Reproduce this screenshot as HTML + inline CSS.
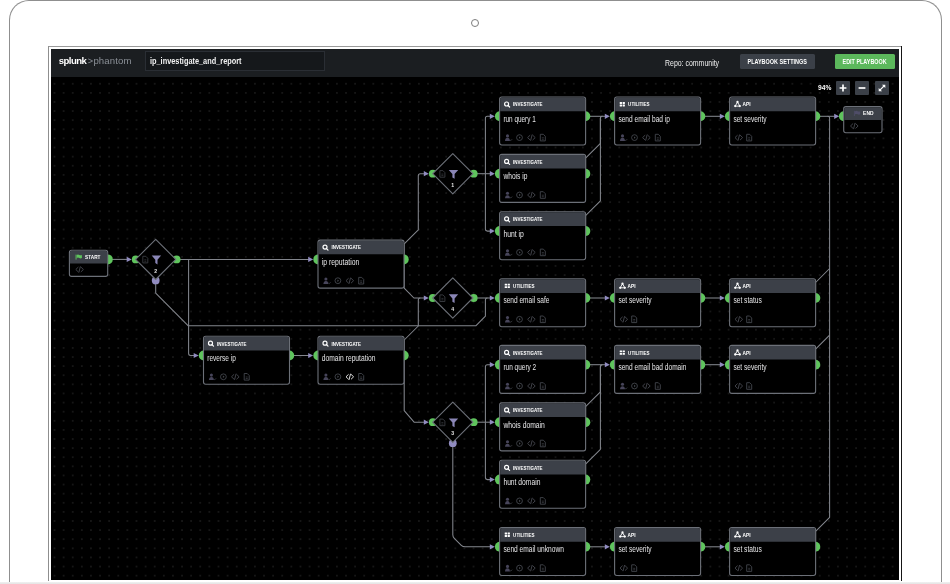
<!DOCTYPE html>
<html lang="en">
<head>
<meta charset="utf-8">
<title>ip_investigate_and_report - Splunk Phantom</title>
<style>
html,body{margin:0;padding:0;background:#fff;}
body{width:950px;height:584px;position:relative;overflow:hidden;font-family:"Liberation Sans",Arial,sans-serif;}
.device{position:absolute;left:9px;top:0;width:931px;height:581px;border:1px solid #8f8f8f;border-bottom:none;border-radius:20px 20px 0 0;box-sizing:content-box;}
.cam{position:absolute;left:471px;top:19px;width:6px;height:6px;border:1px solid #7d7d7d;border-radius:50%;}
.foot{position:absolute;left:0;top:582px;width:950px;height:2px;background:linear-gradient(#f1f1f1,#e3e3e3);}
.bezel-l{position:absolute;left:48px;top:46px;width:1px;height:535px;background:#8f8f8f;}
.bezel-t{position:absolute;left:48px;top:46px;width:854px;height:1px;background:#9a9a9a;}
.bezel-r{position:absolute;left:901px;top:46px;width:1px;height:535px;background:#151515;}
.screen{will-change:transform;position:absolute;left:51px;top:49px;width:848px;height:531px;background:#000;overflow:hidden;}
.dots{position:absolute;left:0;top:28px;right:0;bottom:0;background-image:radial-gradient(circle,#242424 0.45px,rgba(0,0,0,0) 0.95px);background-size:9.12px 9.12px;background-position:-1.06px 2.2px;}
.topbar{position:absolute;left:0;top:0;width:848px;height:28px;background:#1b1e21;}
.logo{position:absolute;left:7.8px;top:5.4px;font-size:9.6px;line-height:14px;color:#fff;font-weight:700;letter-spacing:-0.58px;white-space:nowrap;}
.logo span{font-weight:400;color:#8b9097;letter-spacing:0.12px;margin-left:0.2px;}
.logo i{font-style:normal;font-weight:400;color:#8b9097;margin-left:1.6px;letter-spacing:0;font-size:9.2px;}
.name{position:absolute;left:94px;top:2px;width:180px;height:20px;box-sizing:border-box;border:1px solid #2a2e34;background:#15181b;color:#f2f2f2;font-size:8.3px;font-weight:700;line-height:18.6px;padding-left:4px;white-space:nowrap;}
.name span,.repo span,.btn span,.zoom span{display:inline-block;transform-origin:0 50%;}
.btn span{transform-origin:50% 50%;}
.repo{position:absolute;left:613.8px;top:7.6px;font-size:8.5px;line-height:12px;color:#f0f0f0;white-space:nowrap;}
.btn{position:absolute;top:5px;height:15px;line-height:16.2px;font-size:6.3px;font-weight:700;color:#fff;text-align:center;border-radius:1.5px;white-space:nowrap;}
.b1{left:688.6px;width:75.4px;background:#3b4048;}
.b2{left:784px;width:60px;background:#5cb85c;}
.zoom{position:absolute;left:766.5px;top:34.3px;font-size:7.6px;line-height:10px;font-weight:700;color:#fff;white-space:nowrap;}
.zb{position:absolute;top:32.2px;width:13.9px;height:13.9px;background:#3b4048;border-radius:1px;}
.zb svg{position:absolute;left:0;top:0;}
.graph{position:absolute;left:0;top:0;}
</style>
</head>
<body>
<div class="device"></div>
<div class="cam"></div>
<div class="bezel-t"></div><div class="bezel-l"></div><div class="bezel-r"></div>
<div class="screen">
  <div class="dots"></div>
  <div class="topbar">
    <div class="logo">splunk<i>&gt;</i><span>phantom</span></div>
    <div class="name"><span style="transform:scaleX(0.886)">ip_investigate_and_report</span></div>
    <div class="repo"><span style="transform:scaleX(0.818)">Repo: community</span></div>
    <div class="btn b1"><span style="transform:scaleX(0.869)">PLAYBOOK SETTINGS</span></div>
    <div class="btn b2"><span style="transform:scaleX(0.863)">EDIT PLAYBOOK</span></div>
  </div>
  <div class="zoom"><span style="transform:scaleX(0.875)">94%</span></div>
  <div class="zb" style="left:785.2px"><svg width="14" height="14" viewBox="0 0 14 14"><path d="M7 3.6v6.8M3.6 7h6.8" stroke="#fff" stroke-width="1.7" fill="none"/></svg></div>
  <div class="zb" style="left:804.4px"><svg width="14" height="14" viewBox="0 0 14 14"><path d="M3.6 7h6.8" stroke="#fff" stroke-width="1.7" fill="none"/></svg></div>
  <div class="zb" style="left:824px"><svg width="14" height="14" viewBox="0 0 14 14"><path d="M4.4 9.6L9.6 4.4" stroke="#fff" stroke-width="1.3" fill="none"/><path d="M6.9 3.7h3.4v3.4zM3.7 6.9v3.4h3.4z" fill="#fff"/></svg></div>
</div>
<svg class="graph" width="950" height="584" viewBox="0 0 950 584">
<g fill="none" stroke="#83868d" stroke-width="1.05" stroke-linejoin="round">
<path d="M112 259.4H128.7"/>
<path d="M178.7 259.4H310.2"/>
<path d="M188.6 259.4V353.5Q188.6 355.5 190.6 355.5H195.7"/>
<path d="M155.7 282.4V293.1L188.3 325.8H475.8L485.4 316.2V300Q485.4 298 487.4 298"/>
<path d="M293 355.5H310.2"/>
<path d="M404.2 259.4V243.9L418.3 229.9V175.7Q418.3 173.7 420.3 173.7H425.8"/>
<path d="M404.2 259.4V288.1L413.9 298H425.8"/>
<path d="M404.2 355.5V340L418.3 326V300Q418.3 298 420.3 298"/>
<path d="M404.2 355.5V410.6L414.1 422.2H425.8"/>
<path d="M475.8 173.7H491.8"/>
<path d="M485.4 173.7V118.3Q485.4 116.3 487.4 116.3H491.8"/>
<path d="M485.4 173.7V229.1Q485.4 231.1 487.4 231.1H491.8"/>
<path d="M475.8 422.2H491.8"/>
<path d="M485.4 422.2V366.7Q485.4 364.7 487.4 364.7H491.8"/>
<path d="M485.4 422.2V477.6Q485.4 479.6 487.4 479.6H491.8"/>
<path d="M475.8 298H491.8"/>
<path d="M452.8 445.2V534.8Q452.8 536.8 454.3 538.3L461.3 545.3Q462.8 546.8 465.3 546.8H491.8"/>
<path d="M589.1 116.3H606.8"/>
<path d="M704.1 116.3H721.8"/>
<path d="M589.1 298H606.8"/>
<path d="M704.1 298H721.8"/>
<path d="M589.1 364.7H606.8"/>
<path d="M704.1 364.7H721.8"/>
<path d="M589.1 546.8H606.8"/>
<path d="M704.1 546.8H721.8"/>
<path d="M585.6 173.7V158.2L600.4 143.4V118.3Q600.4 116.3 602.4 116.3"/>
<path d="M585.6 231.1V215.6L600.4 200.8V118.3Q600.4 116.3 602.4 116.3"/>
<path d="M585.6 422.2V406.7L600.4 391.9V366.7Q600.4 364.7 602.4 364.7"/>
<path d="M585.6 479.6V464.1L600.4 449.3V366.7Q600.4 364.7 602.4 364.7"/>
<path d="M819.1 116.3H836.2"/>
<path d="M827.6 116.3Q829.6 116.3 829.6 118.3V517.3L815.6 531.3V546.8"/>
<path d="M815.6 298V282.5L829.6 268.5"/>
<path d="M815.6 364.7V349.2L829.6 335.2"/>
</g>
<g fill="#918cc0">
<path d="M131.7 259.4l-5 -2.6v5.2z"/>
<path d="M313.2 259.4l-5 -2.6v5.2z"/>
<path d="M198.7 355.5l-5 -2.6v5.2z"/>
<path d="M313.2 355.5l-5 -2.6v5.2z"/>
<path d="M428.8 173.7l-5 -2.6v5.2z"/>
<path d="M428.8 298l-5 -2.6v5.2z"/>
<path d="M428.8 422.2l-5 -2.6v5.2z"/>
<path d="M494.8 173.7l-5 -2.6v5.2z"/>
<path d="M494.8 116.3l-5 -2.6v5.2z"/>
<path d="M494.8 231.1l-5 -2.6v5.2z"/>
<path d="M494.8 422.2l-5 -2.6v5.2z"/>
<path d="M494.8 364.7l-5 -2.6v5.2z"/>
<path d="M494.8 479.6l-5 -2.6v5.2z"/>
<path d="M494.8 298l-5 -2.6v5.2z"/>
<path d="M494.8 546.8l-5 -2.6v5.2z"/>
<path d="M609.8 116.3l-5 -2.6v5.2z"/>
<path d="M724.8 116.3l-5 -2.6v5.2z"/>
<path d="M609.8 298l-5 -2.6v5.2z"/>
<path d="M724.8 298l-5 -2.6v5.2z"/>
<path d="M609.8 364.7l-5 -2.6v5.2z"/>
<path d="M724.8 364.7l-5 -2.6v5.2z"/>
<path d="M609.8 546.8l-5 -2.6v5.2z"/>
<path d="M724.8 546.8l-5 -2.6v5.2z"/>
<path d="M839.2 116.3l-5 -2.6v5.2z"/>
</g>
<g fill="#5fc45d">
<circle cx="499.9" cy="116.3" r="5"/>
<circle cx="585.3" cy="116.3" r="5"/>
<circle cx="499.9" cy="173.7" r="5"/>
<circle cx="585.3" cy="173.7" r="5"/>
<circle cx="499.9" cy="231.1" r="5"/>
<circle cx="585.3" cy="231.1" r="5"/>
<circle cx="499.9" cy="298" r="5"/>
<circle cx="585.3" cy="298" r="5"/>
<circle cx="499.9" cy="364.7" r="5"/>
<circle cx="585.3" cy="364.7" r="5"/>
<circle cx="499.9" cy="422.2" r="5"/>
<circle cx="585.3" cy="422.2" r="5"/>
<circle cx="499.9" cy="479.6" r="5"/>
<circle cx="585.3" cy="479.6" r="5"/>
<circle cx="499.9" cy="546.8" r="5"/>
<circle cx="585.3" cy="546.8" r="5"/>
<circle cx="614.9" cy="116.3" r="5"/>
<circle cx="700.3" cy="116.3" r="5"/>
<circle cx="614.9" cy="298" r="5"/>
<circle cx="700.3" cy="298" r="5"/>
<circle cx="614.9" cy="364.7" r="5"/>
<circle cx="700.3" cy="364.7" r="5"/>
<circle cx="614.9" cy="546.8" r="5"/>
<circle cx="700.3" cy="546.8" r="5"/>
<circle cx="729.9" cy="116.3" r="5"/>
<circle cx="815.3" cy="116.3" r="5"/>
<circle cx="729.9" cy="298" r="5"/>
<circle cx="815.3" cy="298" r="5"/>
<circle cx="729.9" cy="364.7" r="5"/>
<circle cx="815.3" cy="364.7" r="5"/>
<circle cx="729.9" cy="546.8" r="5"/>
<circle cx="815.3" cy="546.8" r="5"/>
<circle cx="318.3" cy="259.4" r="5"/>
<circle cx="403.7" cy="259.4" r="5"/>
<circle cx="318.3" cy="355.5" r="5"/>
<circle cx="403.7" cy="355.5" r="5"/>
<circle cx="203.8" cy="355.5" r="5"/>
<circle cx="289.2" cy="355.5" r="5"/>
<circle cx="107.8" cy="259.4" r="5"/>
<circle cx="843.9" cy="116.3" r="5"/>
<circle cx="135.7" cy="259.4" r="3.9"/>
<circle cx="176.6" cy="259.4" r="3.9"/>
<circle cx="432.8" cy="173.7" r="3.9"/>
<circle cx="473.7" cy="173.7" r="3.9"/>
<circle cx="432.8" cy="298" r="3.9"/>
<circle cx="473.7" cy="298" r="3.9"/>
<circle cx="432.8" cy="422.2" r="3.9"/>
<circle cx="473.7" cy="422.2" r="3.9"/>
</g>
<g fill="#918cc0">
<circle cx="155.7" cy="280.4" r="3.9"/>
<circle cx="452.8" cy="443.2" r="3.9"/>
</g>
<g>
<rect x="499.6" y="97" width="86" height="48" rx="2.2" fill="#000" stroke="#6c7078" stroke-width="1.1"/>
<path d="M500.15 111.2v-11.95a1.7 1.7 0 0 1 1.7 -1.7h81.5a1.7 1.7 0 0 1 1.7 1.7v11.95z" fill="#3c4048"/>
<g fill="none" stroke="#fff" stroke-width="1.2"><circle cx="506.6" cy="104" r="2"/><path d="M508.1 105.5l1.5 1.5" stroke-linecap="round"/></g>
<text x="513.1" y="106.3" font-family="'Liberation Sans', Arial, sans-serif" font-size="5.9" font-weight="700" fill="#fff" textLength="29.5" lengthAdjust="spacingAndGlyphs">INVESTIGATE</text>
<text x="503.4" y="121.7" font-family="'Liberation Sans', Arial, sans-serif" font-size="8.2" fill="#e6e6e8" textLength="32.4" lengthAdjust="spacingAndGlyphs">run query 1</text>
<g fill="#47455a"><circle cx="507.5" cy="135.9" r="1.55"/><path d="M505 140.9q0.2 -3.1 2.5 -3.1q2.3 0 2.5 3.1z"/></g><path d="M510 140l0.9 0.6l1.3 -1.5" fill="none" stroke="#43464d" stroke-width="0.7"/>
<g fill="none" stroke="#43464d" stroke-width="0.9"><circle cx="519.5" cy="137.6" r="2.9"/></g><path d="M519 136.4v2.4l1.7 -1.2z" fill="#43464d"/>
<g fill="none" stroke="#43464d" stroke-width="0.95" stroke-linecap="round" stroke-linejoin="round"><path d="M529.9 135.4l-2.3 2.2l2.3 2.2M532.9 135.4l2.3 2.2l-2.3 2.2M532.1 134.9l-1.4 5.4"/></g>
<g fill="none" stroke="#43464d" stroke-width="0.9" stroke-linejoin="round"><path d="M540.3 134.3h3l2 2v4.6h-5z"/><path d="M541.8 137.8h2M541.8 139.3h2" stroke-width="0.7"/></g>
</g>
<g>
<rect x="499.6" y="154.4" width="86" height="48" rx="2.2" fill="#000" stroke="#6c7078" stroke-width="1.1"/>
<path d="M500.15 168.6v-11.95a1.7 1.7 0 0 1 1.7 -1.7h81.5a1.7 1.7 0 0 1 1.7 1.7v11.95z" fill="#3c4048"/>
<g fill="none" stroke="#fff" stroke-width="1.2"><circle cx="506.6" cy="161.4" r="2"/><path d="M508.1 162.9l1.5 1.5" stroke-linecap="round"/></g>
<text x="513.1" y="163.7" font-family="'Liberation Sans', Arial, sans-serif" font-size="5.9" font-weight="700" fill="#fff" textLength="29.5" lengthAdjust="spacingAndGlyphs">INVESTIGATE</text>
<text x="503.4" y="179.1" font-family="'Liberation Sans', Arial, sans-serif" font-size="8.2" fill="#e6e6e8" textLength="24" lengthAdjust="spacingAndGlyphs">whois ip</text>
<g fill="#47455a"><circle cx="507.5" cy="193.3" r="1.55"/><path d="M505 198.3q0.2 -3.1 2.5 -3.1q2.3 0 2.5 3.1z"/></g><path d="M510 197.4l0.9 0.6l1.3 -1.5" fill="none" stroke="#43464d" stroke-width="0.7"/>
<g fill="none" stroke="#43464d" stroke-width="0.9"><circle cx="519.5" cy="195" r="2.9"/></g><path d="M519 193.8v2.4l1.7 -1.2z" fill="#43464d"/>
<g fill="none" stroke="#43464d" stroke-width="0.95" stroke-linecap="round" stroke-linejoin="round"><path d="M529.9 192.8l-2.3 2.2l2.3 2.2M532.9 192.8l2.3 2.2l-2.3 2.2M532.1 192.3l-1.4 5.4"/></g>
<g fill="none" stroke="#43464d" stroke-width="0.9" stroke-linejoin="round"><path d="M540.3 191.7h3l2 2v4.6h-5z"/><path d="M541.8 195.2h2M541.8 196.7h2" stroke-width="0.7"/></g>
</g>
<g>
<rect x="499.6" y="211.8" width="86" height="48" rx="2.2" fill="#000" stroke="#6c7078" stroke-width="1.1"/>
<path d="M500.15 226v-11.95a1.7 1.7 0 0 1 1.7 -1.7h81.5a1.7 1.7 0 0 1 1.7 1.7v11.95z" fill="#3c4048"/>
<g fill="none" stroke="#fff" stroke-width="1.2"><circle cx="506.6" cy="218.8" r="2"/><path d="M508.1 220.3l1.5 1.5" stroke-linecap="round"/></g>
<text x="513.1" y="221.1" font-family="'Liberation Sans', Arial, sans-serif" font-size="5.9" font-weight="700" fill="#fff" textLength="29.5" lengthAdjust="spacingAndGlyphs">INVESTIGATE</text>
<text x="503.4" y="236.5" font-family="'Liberation Sans', Arial, sans-serif" font-size="8.2" fill="#e6e6e8" textLength="20.5" lengthAdjust="spacingAndGlyphs">hunt ip</text>
<g fill="#47455a"><circle cx="507.5" cy="250.7" r="1.55"/><path d="M505 255.7q0.2 -3.1 2.5 -3.1q2.3 0 2.5 3.1z"/></g><path d="M510 254.8l0.9 0.6l1.3 -1.5" fill="none" stroke="#43464d" stroke-width="0.7"/>
<g fill="none" stroke="#43464d" stroke-width="0.9"><circle cx="519.5" cy="252.4" r="2.9"/></g><path d="M519 251.2v2.4l1.7 -1.2z" fill="#43464d"/>
<g fill="none" stroke="#43464d" stroke-width="0.95" stroke-linecap="round" stroke-linejoin="round"><path d="M529.9 250.2l-2.3 2.2l2.3 2.2M532.9 250.2l2.3 2.2l-2.3 2.2M532.1 249.7l-1.4 5.4"/></g>
<g fill="none" stroke="#43464d" stroke-width="0.9" stroke-linejoin="round"><path d="M540.3 249.1h3l2 2v4.6h-5z"/><path d="M541.8 252.6h2M541.8 254.1h2" stroke-width="0.7"/></g>
</g>
<g>
<rect x="499.6" y="278.7" width="86" height="48" rx="2.2" fill="#000" stroke="#6c7078" stroke-width="1.1"/>
<path d="M500.15 292.9v-11.95a1.7 1.7 0 0 1 1.7 -1.7h81.5a1.7 1.7 0 0 1 1.7 1.7v11.95z" fill="#3c4048"/>
<g fill="#fff"><rect x="504.7" y="283.7" width="2.3" height="1.9" rx="0.3"/><rect x="504.7" y="286.2" width="2.3" height="1.9" rx="0.3"/><rect x="507.6" y="283.7" width="2.3" height="1.9" rx="0.3"/><rect x="507.6" y="286.2" width="2.3" height="1.9" rx="0.3"/></g>
<text x="513.1" y="288" font-family="'Liberation Sans', Arial, sans-serif" font-size="5.9" font-weight="700" fill="#fff" textLength="21.5" lengthAdjust="spacingAndGlyphs">UTILITIES</text>
<text x="503.4" y="303.4" font-family="'Liberation Sans', Arial, sans-serif" font-size="8.2" fill="#e6e6e8" textLength="46" lengthAdjust="spacingAndGlyphs">send email safe</text>
<g fill="#47455a"><circle cx="507.5" cy="317.6" r="1.55"/><path d="M505 322.6q0.2 -3.1 2.5 -3.1q2.3 0 2.5 3.1z"/></g><path d="M510 321.7l0.9 0.6l1.3 -1.5" fill="none" stroke="#43464d" stroke-width="0.7"/>
<g fill="none" stroke="#43464d" stroke-width="0.9"><circle cx="519.5" cy="319.3" r="2.9"/></g><path d="M519 318.1v2.4l1.7 -1.2z" fill="#43464d"/>
<g fill="none" stroke="#43464d" stroke-width="0.95" stroke-linecap="round" stroke-linejoin="round"><path d="M529.9 317.1l-2.3 2.2l2.3 2.2M532.9 317.1l2.3 2.2l-2.3 2.2M532.1 316.6l-1.4 5.4"/></g>
<g fill="none" stroke="#43464d" stroke-width="0.9" stroke-linejoin="round"><path d="M540.3 316h3l2 2v4.6h-5z"/><path d="M541.8 319.5h2M541.8 321h2" stroke-width="0.7"/></g>
</g>
<g>
<rect x="499.6" y="345.4" width="86" height="48" rx="2.2" fill="#000" stroke="#6c7078" stroke-width="1.1"/>
<path d="M500.15 359.6v-11.95a1.7 1.7 0 0 1 1.7 -1.7h81.5a1.7 1.7 0 0 1 1.7 1.7v11.95z" fill="#3c4048"/>
<g fill="none" stroke="#fff" stroke-width="1.2"><circle cx="506.6" cy="352.4" r="2"/><path d="M508.1 353.9l1.5 1.5" stroke-linecap="round"/></g>
<text x="513.1" y="354.7" font-family="'Liberation Sans', Arial, sans-serif" font-size="5.9" font-weight="700" fill="#fff" textLength="29.5" lengthAdjust="spacingAndGlyphs">INVESTIGATE</text>
<text x="503.4" y="370.1" font-family="'Liberation Sans', Arial, sans-serif" font-size="8.2" fill="#e6e6e8" textLength="32.8" lengthAdjust="spacingAndGlyphs">run query 2</text>
<g fill="#47455a"><circle cx="507.5" cy="384.3" r="1.55"/><path d="M505 389.3q0.2 -3.1 2.5 -3.1q2.3 0 2.5 3.1z"/></g><path d="M510 388.4l0.9 0.6l1.3 -1.5" fill="none" stroke="#43464d" stroke-width="0.7"/>
<g fill="none" stroke="#43464d" stroke-width="0.9"><circle cx="519.5" cy="386" r="2.9"/></g><path d="M519 384.8v2.4l1.7 -1.2z" fill="#43464d"/>
<g fill="none" stroke="#43464d" stroke-width="0.95" stroke-linecap="round" stroke-linejoin="round"><path d="M529.9 383.8l-2.3 2.2l2.3 2.2M532.9 383.8l2.3 2.2l-2.3 2.2M532.1 383.3l-1.4 5.4"/></g>
<g fill="none" stroke="#43464d" stroke-width="0.9" stroke-linejoin="round"><path d="M540.3 382.7h3l2 2v4.6h-5z"/><path d="M541.8 386.2h2M541.8 387.7h2" stroke-width="0.7"/></g>
</g>
<g>
<rect x="499.6" y="402.9" width="86" height="48" rx="2.2" fill="#000" stroke="#6c7078" stroke-width="1.1"/>
<path d="M500.15 417.1v-11.95a1.7 1.7 0 0 1 1.7 -1.7h81.5a1.7 1.7 0 0 1 1.7 1.7v11.95z" fill="#3c4048"/>
<g fill="none" stroke="#fff" stroke-width="1.2"><circle cx="506.6" cy="409.9" r="2"/><path d="M508.1 411.4l1.5 1.5" stroke-linecap="round"/></g>
<text x="513.1" y="412.2" font-family="'Liberation Sans', Arial, sans-serif" font-size="5.9" font-weight="700" fill="#fff" textLength="29.5" lengthAdjust="spacingAndGlyphs">INVESTIGATE</text>
<text x="503.4" y="427.6" font-family="'Liberation Sans', Arial, sans-serif" font-size="8.2" fill="#e6e6e8" textLength="41.5" lengthAdjust="spacingAndGlyphs">whois domain</text>
<g fill="#47455a"><circle cx="507.5" cy="441.8" r="1.55"/><path d="M505 446.8q0.2 -3.1 2.5 -3.1q2.3 0 2.5 3.1z"/></g><path d="M510 445.9l0.9 0.6l1.3 -1.5" fill="none" stroke="#43464d" stroke-width="0.7"/>
<g fill="none" stroke="#43464d" stroke-width="0.9"><circle cx="519.5" cy="443.5" r="2.9"/></g><path d="M519 442.3v2.4l1.7 -1.2z" fill="#43464d"/>
<g fill="none" stroke="#43464d" stroke-width="0.95" stroke-linecap="round" stroke-linejoin="round"><path d="M529.9 441.3l-2.3 2.2l2.3 2.2M532.9 441.3l2.3 2.2l-2.3 2.2M532.1 440.8l-1.4 5.4"/></g>
<g fill="none" stroke="#43464d" stroke-width="0.9" stroke-linejoin="round"><path d="M540.3 440.2h3l2 2v4.6h-5z"/><path d="M541.8 443.7h2M541.8 445.2h2" stroke-width="0.7"/></g>
</g>
<g>
<rect x="499.6" y="460.3" width="86" height="48" rx="2.2" fill="#000" stroke="#6c7078" stroke-width="1.1"/>
<path d="M500.15 474.5v-11.95a1.7 1.7 0 0 1 1.7 -1.7h81.5a1.7 1.7 0 0 1 1.7 1.7v11.95z" fill="#3c4048"/>
<g fill="none" stroke="#fff" stroke-width="1.2"><circle cx="506.6" cy="467.3" r="2"/><path d="M508.1 468.8l1.5 1.5" stroke-linecap="round"/></g>
<text x="513.1" y="469.6" font-family="'Liberation Sans', Arial, sans-serif" font-size="5.9" font-weight="700" fill="#fff" textLength="29.5" lengthAdjust="spacingAndGlyphs">INVESTIGATE</text>
<text x="503.4" y="485" font-family="'Liberation Sans', Arial, sans-serif" font-size="8.2" fill="#e6e6e8" textLength="37" lengthAdjust="spacingAndGlyphs">hunt domain</text>
<g fill="#47455a"><circle cx="507.5" cy="499.2" r="1.55"/><path d="M505 504.2q0.2 -3.1 2.5 -3.1q2.3 0 2.5 3.1z"/></g><path d="M510 503.3l0.9 0.6l1.3 -1.5" fill="none" stroke="#43464d" stroke-width="0.7"/>
<g fill="none" stroke="#43464d" stroke-width="0.9"><circle cx="519.5" cy="500.9" r="2.9"/></g><path d="M519 499.7v2.4l1.7 -1.2z" fill="#43464d"/>
<g fill="none" stroke="#43464d" stroke-width="0.95" stroke-linecap="round" stroke-linejoin="round"><path d="M529.9 498.7l-2.3 2.2l2.3 2.2M532.9 498.7l2.3 2.2l-2.3 2.2M532.1 498.2l-1.4 5.4"/></g>
<g fill="none" stroke="#43464d" stroke-width="0.9" stroke-linejoin="round"><path d="M540.3 497.6h3l2 2v4.6h-5z"/><path d="M541.8 501.1h2M541.8 502.6h2" stroke-width="0.7"/></g>
</g>
<g>
<rect x="499.6" y="527.5" width="86" height="48" rx="2.2" fill="#000" stroke="#6c7078" stroke-width="1.1"/>
<path d="M500.15 541.7v-11.95a1.7 1.7 0 0 1 1.7 -1.7h81.5a1.7 1.7 0 0 1 1.7 1.7v11.95z" fill="#3c4048"/>
<g fill="#fff"><rect x="504.7" y="532.5" width="2.3" height="1.9" rx="0.3"/><rect x="504.7" y="535" width="2.3" height="1.9" rx="0.3"/><rect x="507.6" y="532.5" width="2.3" height="1.9" rx="0.3"/><rect x="507.6" y="535" width="2.3" height="1.9" rx="0.3"/></g>
<text x="513.1" y="536.8" font-family="'Liberation Sans', Arial, sans-serif" font-size="5.9" font-weight="700" fill="#fff" textLength="21.5" lengthAdjust="spacingAndGlyphs">UTILITIES</text>
<text x="503.4" y="552.2" font-family="'Liberation Sans', Arial, sans-serif" font-size="8.2" fill="#e6e6e8" textLength="60.5" lengthAdjust="spacingAndGlyphs">send email unknown</text>
<g fill="#47455a"><circle cx="507.5" cy="566.4" r="1.55"/><path d="M505 571.4q0.2 -3.1 2.5 -3.1q2.3 0 2.5 3.1z"/></g><path d="M510 570.5l0.9 0.6l1.3 -1.5" fill="none" stroke="#43464d" stroke-width="0.7"/>
<g fill="none" stroke="#43464d" stroke-width="0.9"><circle cx="519.5" cy="568.1" r="2.9"/></g><path d="M519 566.9v2.4l1.7 -1.2z" fill="#43464d"/>
<g fill="none" stroke="#43464d" stroke-width="0.95" stroke-linecap="round" stroke-linejoin="round"><path d="M529.9 565.9l-2.3 2.2l2.3 2.2M532.9 565.9l2.3 2.2l-2.3 2.2M532.1 565.4l-1.4 5.4"/></g>
<g fill="none" stroke="#43464d" stroke-width="0.9" stroke-linejoin="round"><path d="M540.3 564.8h3l2 2v4.6h-5z"/><path d="M541.8 568.3h2M541.8 569.8h2" stroke-width="0.7"/></g>
</g>
<g>
<rect x="614.6" y="97" width="86" height="48" rx="2.2" fill="#000" stroke="#6c7078" stroke-width="1.1"/>
<path d="M615.15 111.2v-11.95a1.7 1.7 0 0 1 1.7 -1.7h81.5a1.7 1.7 0 0 1 1.7 1.7v11.95z" fill="#3c4048"/>
<g fill="#fff"><rect x="619.7" y="102" width="2.3" height="1.9" rx="0.3"/><rect x="619.7" y="104.5" width="2.3" height="1.9" rx="0.3"/><rect x="622.6" y="102" width="2.3" height="1.9" rx="0.3"/><rect x="622.6" y="104.5" width="2.3" height="1.9" rx="0.3"/></g>
<text x="628.1" y="106.3" font-family="'Liberation Sans', Arial, sans-serif" font-size="5.9" font-weight="700" fill="#fff" textLength="21.5" lengthAdjust="spacingAndGlyphs">UTILITIES</text>
<text x="618.4" y="121.7" font-family="'Liberation Sans', Arial, sans-serif" font-size="8.2" fill="#e6e6e8" textLength="51.6" lengthAdjust="spacingAndGlyphs">send email bad ip</text>
<g fill="#47455a"><circle cx="622.5" cy="135.9" r="1.55"/><path d="M620 140.9q0.2 -3.1 2.5 -3.1q2.3 0 2.5 3.1z"/></g><path d="M625 140l0.9 0.6l1.3 -1.5" fill="none" stroke="#43464d" stroke-width="0.7"/>
<g fill="none" stroke="#43464d" stroke-width="0.9"><circle cx="634.5" cy="137.6" r="2.9"/></g><path d="M634 136.4v2.4l1.7 -1.2z" fill="#43464d"/>
<g fill="none" stroke="#43464d" stroke-width="0.95" stroke-linecap="round" stroke-linejoin="round"><path d="M644.9 135.4l-2.3 2.2l2.3 2.2M647.9 135.4l2.3 2.2l-2.3 2.2M647.1 134.9l-1.4 5.4"/></g>
<g fill="none" stroke="#43464d" stroke-width="0.9" stroke-linejoin="round"><path d="M655.3 134.3h3l2 2v4.6h-5z"/><path d="M656.8 137.8h2M656.8 139.3h2" stroke-width="0.7"/></g>
</g>
<g>
<rect x="614.6" y="278.7" width="86" height="48" rx="2.2" fill="#000" stroke="#6c7078" stroke-width="1.1"/>
<path d="M615.15 292.9v-11.95a1.7 1.7 0 0 1 1.7 -1.7h81.5a1.7 1.7 0 0 1 1.7 1.7v11.95z" fill="#3c4048"/>
<g fill="none" stroke="#fff" stroke-width="0.9"><path d="M622.5 283.7l-2.3 4.1h4.6z"/></g><g fill="#fff"><circle cx="622.5" cy="283.7" r="1.15"/><circle cx="620.2" cy="287.8" r="1.15"/><circle cx="624.8" cy="287.8" r="1.15"/></g>
<text x="627.5" y="288" font-family="'Liberation Sans', Arial, sans-serif" font-size="5.9" font-weight="700" fill="#fff" textLength="8" lengthAdjust="spacingAndGlyphs">API</text>
<text x="618.4" y="303.4" font-family="'Liberation Sans', Arial, sans-serif" font-size="8.2" fill="#e6e6e8" textLength="33.2" lengthAdjust="spacingAndGlyphs">set severity</text>
<g fill="none" stroke="#43464d" stroke-width="0.95" stroke-linecap="round" stroke-linejoin="round"><path d="M622.3 317.1l-2.3 2.2l2.3 2.2M625.3 317.1l2.3 2.2l-2.3 2.2M624.5 316.6l-1.4 5.4"/></g>
<g fill="none" stroke="#43464d" stroke-width="0.9" stroke-linejoin="round"><path d="M631.7 316h3l2 2v4.6h-5z"/><path d="M633.2 319.5h2M633.2 321h2" stroke-width="0.7"/></g>
</g>
<g>
<rect x="614.6" y="345.4" width="86" height="48" rx="2.2" fill="#000" stroke="#6c7078" stroke-width="1.1"/>
<path d="M615.15 359.6v-11.95a1.7 1.7 0 0 1 1.7 -1.7h81.5a1.7 1.7 0 0 1 1.7 1.7v11.95z" fill="#3c4048"/>
<g fill="#fff"><rect x="619.7" y="350.4" width="2.3" height="1.9" rx="0.3"/><rect x="619.7" y="352.9" width="2.3" height="1.9" rx="0.3"/><rect x="622.6" y="350.4" width="2.3" height="1.9" rx="0.3"/><rect x="622.6" y="352.9" width="2.3" height="1.9" rx="0.3"/></g>
<text x="628.1" y="354.7" font-family="'Liberation Sans', Arial, sans-serif" font-size="5.9" font-weight="700" fill="#fff" textLength="21.5" lengthAdjust="spacingAndGlyphs">UTILITIES</text>
<text x="618.4" y="370.1" font-family="'Liberation Sans', Arial, sans-serif" font-size="8.2" fill="#e6e6e8" textLength="68" lengthAdjust="spacingAndGlyphs">send email bad domain</text>
<g fill="#47455a"><circle cx="622.5" cy="384.3" r="1.55"/><path d="M620 389.3q0.2 -3.1 2.5 -3.1q2.3 0 2.5 3.1z"/></g><path d="M625 388.4l0.9 0.6l1.3 -1.5" fill="none" stroke="#43464d" stroke-width="0.7"/>
<g fill="none" stroke="#43464d" stroke-width="0.9"><circle cx="634.5" cy="386" r="2.9"/></g><path d="M634 384.8v2.4l1.7 -1.2z" fill="#43464d"/>
<g fill="none" stroke="#43464d" stroke-width="0.95" stroke-linecap="round" stroke-linejoin="round"><path d="M644.9 383.8l-2.3 2.2l2.3 2.2M647.9 383.8l2.3 2.2l-2.3 2.2M647.1 383.3l-1.4 5.4"/></g>
<g fill="none" stroke="#43464d" stroke-width="0.9" stroke-linejoin="round"><path d="M655.3 382.7h3l2 2v4.6h-5z"/><path d="M656.8 386.2h2M656.8 387.7h2" stroke-width="0.7"/></g>
</g>
<g>
<rect x="614.6" y="527.5" width="86" height="48" rx="2.2" fill="#000" stroke="#6c7078" stroke-width="1.1"/>
<path d="M615.15 541.7v-11.95a1.7 1.7 0 0 1 1.7 -1.7h81.5a1.7 1.7 0 0 1 1.7 1.7v11.95z" fill="#3c4048"/>
<g fill="none" stroke="#fff" stroke-width="0.9"><path d="M622.5 532.5l-2.3 4.1h4.6z"/></g><g fill="#fff"><circle cx="622.5" cy="532.5" r="1.15"/><circle cx="620.2" cy="536.6" r="1.15"/><circle cx="624.8" cy="536.6" r="1.15"/></g>
<text x="627.5" y="536.8" font-family="'Liberation Sans', Arial, sans-serif" font-size="5.9" font-weight="700" fill="#fff" textLength="8" lengthAdjust="spacingAndGlyphs">API</text>
<text x="618.4" y="552.2" font-family="'Liberation Sans', Arial, sans-serif" font-size="8.2" fill="#e6e6e8" textLength="33.2" lengthAdjust="spacingAndGlyphs">set severity</text>
<g fill="none" stroke="#43464d" stroke-width="0.95" stroke-linecap="round" stroke-linejoin="round"><path d="M622.3 565.9l-2.3 2.2l2.3 2.2M625.3 565.9l2.3 2.2l-2.3 2.2M624.5 565.4l-1.4 5.4"/></g>
<g fill="none" stroke="#43464d" stroke-width="0.9" stroke-linejoin="round"><path d="M631.7 564.8h3l2 2v4.6h-5z"/><path d="M633.2 568.3h2M633.2 569.8h2" stroke-width="0.7"/></g>
</g>
<g>
<rect x="729.6" y="97" width="86" height="48" rx="2.2" fill="#000" stroke="#6c7078" stroke-width="1.1"/>
<path d="M730.15 111.2v-11.95a1.7 1.7 0 0 1 1.7 -1.7h81.5a1.7 1.7 0 0 1 1.7 1.7v11.95z" fill="#3c4048"/>
<g fill="none" stroke="#fff" stroke-width="0.9"><path d="M737.5 102l-2.3 4.1h4.6z"/></g><g fill="#fff"><circle cx="737.5" cy="102" r="1.15"/><circle cx="735.2" cy="106.1" r="1.15"/><circle cx="739.8" cy="106.1" r="1.15"/></g>
<text x="742.5" y="106.3" font-family="'Liberation Sans', Arial, sans-serif" font-size="5.9" font-weight="700" fill="#fff" textLength="8" lengthAdjust="spacingAndGlyphs">API</text>
<text x="733.4" y="121.7" font-family="'Liberation Sans', Arial, sans-serif" font-size="8.2" fill="#e6e6e8" textLength="33.2" lengthAdjust="spacingAndGlyphs">set severity</text>
<g fill="none" stroke="#43464d" stroke-width="0.95" stroke-linecap="round" stroke-linejoin="round"><path d="M737.3 135.4l-2.3 2.2l2.3 2.2M740.3 135.4l2.3 2.2l-2.3 2.2M739.5 134.9l-1.4 5.4"/></g>
<g fill="none" stroke="#43464d" stroke-width="0.9" stroke-linejoin="round"><path d="M746.7 134.3h3l2 2v4.6h-5z"/><path d="M748.2 137.8h2M748.2 139.3h2" stroke-width="0.7"/></g>
</g>
<g>
<rect x="729.6" y="278.7" width="86" height="48" rx="2.2" fill="#000" stroke="#6c7078" stroke-width="1.1"/>
<path d="M730.15 292.9v-11.95a1.7 1.7 0 0 1 1.7 -1.7h81.5a1.7 1.7 0 0 1 1.7 1.7v11.95z" fill="#3c4048"/>
<g fill="none" stroke="#fff" stroke-width="0.9"><path d="M737.5 283.7l-2.3 4.1h4.6z"/></g><g fill="#fff"><circle cx="737.5" cy="283.7" r="1.15"/><circle cx="735.2" cy="287.8" r="1.15"/><circle cx="739.8" cy="287.8" r="1.15"/></g>
<text x="742.5" y="288" font-family="'Liberation Sans', Arial, sans-serif" font-size="5.9" font-weight="700" fill="#fff" textLength="8" lengthAdjust="spacingAndGlyphs">API</text>
<text x="733.4" y="303.4" font-family="'Liberation Sans', Arial, sans-serif" font-size="8.2" fill="#e6e6e8" textLength="28.5" lengthAdjust="spacingAndGlyphs">set status</text>
<g fill="none" stroke="#43464d" stroke-width="0.95" stroke-linecap="round" stroke-linejoin="round"><path d="M737.3 317.1l-2.3 2.2l2.3 2.2M740.3 317.1l2.3 2.2l-2.3 2.2M739.5 316.6l-1.4 5.4"/></g>
<g fill="none" stroke="#43464d" stroke-width="0.9" stroke-linejoin="round"><path d="M746.7 316h3l2 2v4.6h-5z"/><path d="M748.2 319.5h2M748.2 321h2" stroke-width="0.7"/></g>
</g>
<g>
<rect x="729.6" y="345.4" width="86" height="48" rx="2.2" fill="#000" stroke="#6c7078" stroke-width="1.1"/>
<path d="M730.15 359.6v-11.95a1.7 1.7 0 0 1 1.7 -1.7h81.5a1.7 1.7 0 0 1 1.7 1.7v11.95z" fill="#3c4048"/>
<g fill="none" stroke="#fff" stroke-width="0.9"><path d="M737.5 350.4l-2.3 4.1h4.6z"/></g><g fill="#fff"><circle cx="737.5" cy="350.4" r="1.15"/><circle cx="735.2" cy="354.5" r="1.15"/><circle cx="739.8" cy="354.5" r="1.15"/></g>
<text x="742.5" y="354.7" font-family="'Liberation Sans', Arial, sans-serif" font-size="5.9" font-weight="700" fill="#fff" textLength="8" lengthAdjust="spacingAndGlyphs">API</text>
<text x="733.4" y="370.1" font-family="'Liberation Sans', Arial, sans-serif" font-size="8.2" fill="#e6e6e8" textLength="33.2" lengthAdjust="spacingAndGlyphs">set severity</text>
<g fill="none" stroke="#43464d" stroke-width="0.95" stroke-linecap="round" stroke-linejoin="round"><path d="M737.3 383.8l-2.3 2.2l2.3 2.2M740.3 383.8l2.3 2.2l-2.3 2.2M739.5 383.3l-1.4 5.4"/></g>
<g fill="none" stroke="#43464d" stroke-width="0.9" stroke-linejoin="round"><path d="M746.7 382.7h3l2 2v4.6h-5z"/><path d="M748.2 386.2h2M748.2 387.7h2" stroke-width="0.7"/></g>
</g>
<g>
<rect x="729.6" y="527.5" width="86" height="48" rx="2.2" fill="#000" stroke="#6c7078" stroke-width="1.1"/>
<path d="M730.15 541.7v-11.95a1.7 1.7 0 0 1 1.7 -1.7h81.5a1.7 1.7 0 0 1 1.7 1.7v11.95z" fill="#3c4048"/>
<g fill="none" stroke="#fff" stroke-width="0.9"><path d="M737.5 532.5l-2.3 4.1h4.6z"/></g><g fill="#fff"><circle cx="737.5" cy="532.5" r="1.15"/><circle cx="735.2" cy="536.6" r="1.15"/><circle cx="739.8" cy="536.6" r="1.15"/></g>
<text x="742.5" y="536.8" font-family="'Liberation Sans', Arial, sans-serif" font-size="5.9" font-weight="700" fill="#fff" textLength="8" lengthAdjust="spacingAndGlyphs">API</text>
<text x="733.4" y="552.2" font-family="'Liberation Sans', Arial, sans-serif" font-size="8.2" fill="#e6e6e8" textLength="28.5" lengthAdjust="spacingAndGlyphs">set status</text>
<g fill="none" stroke="#43464d" stroke-width="0.95" stroke-linecap="round" stroke-linejoin="round"><path d="M737.3 565.9l-2.3 2.2l2.3 2.2M740.3 565.9l2.3 2.2l-2.3 2.2M739.5 565.4l-1.4 5.4"/></g>
<g fill="none" stroke="#43464d" stroke-width="0.9" stroke-linejoin="round"><path d="M746.7 564.8h3l2 2v4.6h-5z"/><path d="M748.2 568.3h2M748.2 569.8h2" stroke-width="0.7"/></g>
</g>
<g>
<rect x="318" y="240.1" width="86" height="48" rx="2.2" fill="#000" stroke="#6c7078" stroke-width="1.1"/>
<path d="M318.55 254.3v-11.95a1.7 1.7 0 0 1 1.7 -1.7h81.5a1.7 1.7 0 0 1 1.7 1.7v11.95z" fill="#3c4048"/>
<g fill="none" stroke="#fff" stroke-width="1.2"><circle cx="325" cy="247.1" r="2"/><path d="M326.5 248.6l1.5 1.5" stroke-linecap="round"/></g>
<text x="331.5" y="249.4" font-family="'Liberation Sans', Arial, sans-serif" font-size="5.9" font-weight="700" fill="#fff" textLength="29.5" lengthAdjust="spacingAndGlyphs">INVESTIGATE</text>
<text x="321.8" y="264.8" font-family="'Liberation Sans', Arial, sans-serif" font-size="8.2" fill="#e6e6e8" textLength="37.5" lengthAdjust="spacingAndGlyphs">ip reputation</text>
<g fill="#47455a"><circle cx="325.9" cy="279" r="1.55"/><path d="M323.4 284q0.2 -3.1 2.5 -3.1q2.3 0 2.5 3.1z"/></g><path d="M328.4 283.1l0.9 0.6l1.3 -1.5" fill="none" stroke="#43464d" stroke-width="0.7"/>
<g fill="none" stroke="#43464d" stroke-width="0.9"><circle cx="337.9" cy="280.7" r="2.9"/></g><path d="M337.4 279.5v2.4l1.7 -1.2z" fill="#43464d"/>
<g fill="none" stroke="#43464d" stroke-width="0.95" stroke-linecap="round" stroke-linejoin="round"><path d="M348.3 278.5l-2.3 2.2l2.3 2.2M351.3 278.5l2.3 2.2l-2.3 2.2M350.5 278l-1.4 5.4"/></g>
<g fill="none" stroke="#43464d" stroke-width="0.9" stroke-linejoin="round"><path d="M358.7 277.4h3l2 2v4.6h-5z"/><path d="M360.2 280.9h2M360.2 282.4h2" stroke-width="0.7"/></g>
</g>
<g>
<rect x="318" y="336.2" width="86" height="48" rx="2.2" fill="#000" stroke="#6c7078" stroke-width="1.1"/>
<path d="M318.55 350.4v-11.95a1.7 1.7 0 0 1 1.7 -1.7h81.5a1.7 1.7 0 0 1 1.7 1.7v11.95z" fill="#3c4048"/>
<g fill="none" stroke="#fff" stroke-width="1.2"><circle cx="325" cy="343.2" r="2"/><path d="M326.5 344.7l1.5 1.5" stroke-linecap="round"/></g>
<text x="331.5" y="345.5" font-family="'Liberation Sans', Arial, sans-serif" font-size="5.9" font-weight="700" fill="#fff" textLength="29.5" lengthAdjust="spacingAndGlyphs">INVESTIGATE</text>
<text x="321.8" y="360.9" font-family="'Liberation Sans', Arial, sans-serif" font-size="8.2" fill="#e6e6e8" textLength="53.7" lengthAdjust="spacingAndGlyphs">domain reputation</text>
<g fill="#47455a"><circle cx="325.9" cy="375.1" r="1.55"/><path d="M323.4 380.1q0.2 -3.1 2.5 -3.1q2.3 0 2.5 3.1z"/></g><path d="M328.4 379.2l0.9 0.6l1.3 -1.5" fill="none" stroke="#43464d" stroke-width="0.7"/>
<g fill="none" stroke="#43464d" stroke-width="0.9"><circle cx="337.9" cy="376.8" r="2.9"/></g><path d="M337.4 375.6v2.4l1.7 -1.2z" fill="#43464d"/>
<g fill="none" stroke="#e8e8e8" stroke-width="0.95" stroke-linecap="round" stroke-linejoin="round"><path d="M348.3 374.6l-2.3 2.2l2.3 2.2M351.3 374.6l2.3 2.2l-2.3 2.2M350.5 374.1l-1.4 5.4"/></g>
<g fill="none" stroke="#43464d" stroke-width="0.9" stroke-linejoin="round"><path d="M358.7 373.5h3l2 2v4.6h-5z"/><path d="M360.2 377h2M360.2 378.5h2" stroke-width="0.7"/></g>
</g>
<g>
<rect x="203.5" y="336.2" width="86" height="48" rx="2.2" fill="#000" stroke="#6c7078" stroke-width="1.1"/>
<path d="M204.05 350.4v-11.95a1.7 1.7 0 0 1 1.7 -1.7h81.5a1.7 1.7 0 0 1 1.7 1.7v11.95z" fill="#3c4048"/>
<g fill="none" stroke="#fff" stroke-width="1.2"><circle cx="210.5" cy="343.2" r="2"/><path d="M212 344.7l1.5 1.5" stroke-linecap="round"/></g>
<text x="217" y="345.5" font-family="'Liberation Sans', Arial, sans-serif" font-size="5.9" font-weight="700" fill="#fff" textLength="29.5" lengthAdjust="spacingAndGlyphs">INVESTIGATE</text>
<text x="207.3" y="360.9" font-family="'Liberation Sans', Arial, sans-serif" font-size="8.2" fill="#e6e6e8" textLength="28.5" lengthAdjust="spacingAndGlyphs">reverse ip</text>
<g fill="#47455a"><circle cx="211.4" cy="375.1" r="1.55"/><path d="M208.9 380.1q0.2 -3.1 2.5 -3.1q2.3 0 2.5 3.1z"/></g><path d="M213.9 379.2l0.9 0.6l1.3 -1.5" fill="none" stroke="#43464d" stroke-width="0.7"/>
<g fill="none" stroke="#43464d" stroke-width="0.9"><circle cx="223.4" cy="376.8" r="2.9"/></g><path d="M222.9 375.6v2.4l1.7 -1.2z" fill="#43464d"/>
<g fill="none" stroke="#43464d" stroke-width="0.95" stroke-linecap="round" stroke-linejoin="round"><path d="M233.8 374.6l-2.3 2.2l2.3 2.2M236.8 374.6l2.3 2.2l-2.3 2.2M236 374.1l-1.4 5.4"/></g>
<g fill="none" stroke="#43464d" stroke-width="0.9" stroke-linejoin="round"><path d="M244.2 373.5h3l2 2v4.6h-5z"/><path d="M245.7 377h2M245.7 378.5h2" stroke-width="0.7"/></g>
</g>
<g>
<rect x="69.4" y="250.3" width="38.3" height="26.1" rx="2.2" fill="#000" stroke="#6c7078" stroke-width="1.1"/>
<path d="M69.95 263.6v-11.05a1.7 1.7 0 0 1 1.7 -1.7h33.8a1.7 1.7 0 0 1 1.7 1.7v11.05z" fill="#3c4048"/>
<g fill="#5fc45d"><rect x="75.6" y="254.6" width="0.9" height="5"/><path d="M76.7 254.9q1.3 -0.8 2.6 0t2.6 0v3.1q-1.3 0.8 -2.6 0t-2.6 0z"/></g>
<text x="85.1" y="258.8" font-family="'Liberation Sans', Arial, sans-serif" font-size="6.1" font-weight="700" fill="#fff" textLength="15.4" lengthAdjust="spacingAndGlyphs">START</text>
<g fill="none" stroke="#43464d" stroke-width="0.95" stroke-linecap="round" stroke-linejoin="round"><path d="M78.1 267.3l-2.3 2.2l2.3 2.2M81.1 267.3l2.3 2.2l-2.3 2.2M80.3 266.8l-1.4 5.4"/></g>
</g>
<g>
<rect x="843.7" y="106.6" width="38.3" height="26.1" rx="2.2" fill="#000" stroke="#6c7078" stroke-width="1.1"/>
<path d="M844.25 119.9v-11.05a1.7 1.7 0 0 1 1.7 -1.7h33.8a1.7 1.7 0 0 1 1.7 1.7v11.05z" fill="#3c4048"/>
<g fill="#4f4d68"><rect x="853.9" y="110.9" width="0.9" height="5"/><path d="M855 111.2q1.3 -0.8 2.6 0t2.6 0v3.1q-1.3 0.8 -2.6 0t-2.6 0z"/></g>
<text x="863.1" y="115.1" font-family="'Liberation Sans', Arial, sans-serif" font-size="6.1" font-weight="700" fill="#fff" textLength="10.4" lengthAdjust="spacingAndGlyphs">END</text>
<g fill="none" stroke="#43464d" stroke-width="0.95" stroke-linecap="round" stroke-linejoin="round"><path d="M852.8 123.8l-2.3 2.2l2.3 2.2M855.8 123.8l2.3 2.2l-2.3 2.2M855 123.3l-1.4 5.4"/></g>
</g>
<g>
<path d="M155.7 239.3l20.1 20.1l-20.1 20.1l-20.1 -20.1z" fill="#000" stroke="#6c7078" stroke-width="1.1" stroke-linejoin="round"/>
<g fill="none" stroke="#3a3c42" stroke-width="0.9" stroke-linejoin="round"><path d="M142.8 256.3h3l2 2v4.6h-5z"/><path d="M144.3 259.8h2M144.3 261.3h2" stroke-width="0.7"/></g>
<path fill="#8a86b6" d="M151.7 255.6h9.4l-3.6 4.2v4.6l-2.2 -1.3v-3.3z"/>
<text x="155.7" y="272.6" font-family="'Liberation Sans', Arial, sans-serif" font-size="5.2" font-weight="700" fill="#e6e6e6" text-anchor="middle">2</text>
</g>
<g>
<path d="M452.8 153.6l20.1 20.1l-20.1 20.1l-20.1 -20.1z" fill="#000" stroke="#6c7078" stroke-width="1.1" stroke-linejoin="round"/>
<g fill="none" stroke="#3a3c42" stroke-width="0.9" stroke-linejoin="round"><path d="M439.9 170.6h3l2 2v4.6h-5z"/><path d="M441.4 174.1h2M441.4 175.6h2" stroke-width="0.7"/></g>
<path fill="#8a86b6" d="M448.8 169.9h9.4l-3.6 4.2v4.6l-2.2 -1.3v-3.3z"/>
<text x="452.8" y="186.9" font-family="'Liberation Sans', Arial, sans-serif" font-size="5.2" font-weight="700" fill="#e6e6e6" text-anchor="middle">1</text>
</g>
<g>
<path d="M452.8 277.9l20.1 20.1l-20.1 20.1l-20.1 -20.1z" fill="#000" stroke="#6c7078" stroke-width="1.1" stroke-linejoin="round"/>
<g fill="none" stroke="#3a3c42" stroke-width="0.9" stroke-linejoin="round"><path d="M439.9 294.9h3l2 2v4.6h-5z"/><path d="M441.4 298.4h2M441.4 299.9h2" stroke-width="0.7"/></g>
<path fill="#8a86b6" d="M448.8 294.2h9.4l-3.6 4.2v4.6l-2.2 -1.3v-3.3z"/>
<text x="452.8" y="311.2" font-family="'Liberation Sans', Arial, sans-serif" font-size="5.2" font-weight="700" fill="#e6e6e6" text-anchor="middle">4</text>
</g>
<g>
<path d="M452.8 402.1l20.1 20.1l-20.1 20.1l-20.1 -20.1z" fill="#000" stroke="#6c7078" stroke-width="1.1" stroke-linejoin="round"/>
<g fill="none" stroke="#3a3c42" stroke-width="0.9" stroke-linejoin="round"><path d="M439.9 419.1h3l2 2v4.6h-5z"/><path d="M441.4 422.6h2M441.4 424.1h2" stroke-width="0.7"/></g>
<path fill="#8a86b6" d="M448.8 418.4h9.4l-3.6 4.2v4.6l-2.2 -1.3v-3.3z"/>
<text x="452.8" y="435.4" font-family="'Liberation Sans', Arial, sans-serif" font-size="5.2" font-weight="700" fill="#e6e6e6" text-anchor="middle">3</text>
</g>
</svg>
<div class="foot"></div>
</body>
</html>
